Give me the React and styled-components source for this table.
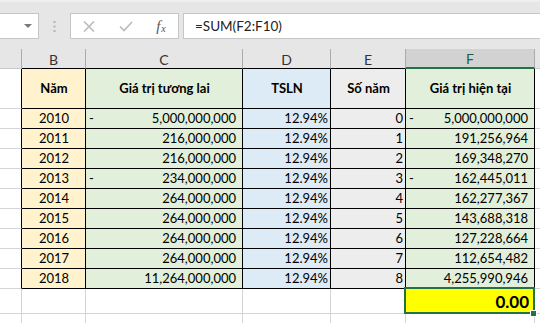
import React from 'react';
import styled, { createGlobalStyle } from 'styled-components';

const GRID = '#d4d4d4';
const INK = '#000';
const GREEN = '#217346';

const GlobalStyle = createGlobalStyle`
  html, body {
    margin: 0;
    padding: 0;
    background: #fff;
  }
  body {
    font-family: Lato, "Liberation Sans", sans-serif;
  }
`;

const Page = styled.div`
  width: 540px;
  height: 323px;
  overflow: hidden;
  background: #fff;
`;

const Chrome = styled.div`
  box-sizing: border-box;
  height: 49px;
  background: #e6e6e6;
  border-top: 2px solid #efefef;
  padding-top: 11px;
  display: flex;
  align-items: flex-start;
`;

const NameBox = styled.div`
  box-sizing: border-box;
  width: 39px;
  height: 26px;
  background: #fff;
  border: 1px solid #c6c6c6;
  border-left: none;
  display: flex;
  align-items: center;
  justify-content: flex-end;
  padding-right: 6px;
`;

const Caret = styled.span`
  width: 0;
  height: 0;
  border-left: 4px solid transparent;
  border-right: 4px solid transparent;
  border-top: 4px solid #7a7a7a;
`;

const Grip = styled.div`
  width: 31px;
  height: 26px;
  display: flex;
  align-items: center;
  justify-content: center;
`;

const FxBox = styled.div`
  box-sizing: border-box;
  width: 109px;
  height: 26px;
  background: #fff;
  border: 1px solid #c6c6c6;
  display: flex;
  align-items: center;
`;

const FxSlot = styled.div`
  width: ${(p) => p.$w}px;
  height: 100%;
  display: flex;
  align-items: center;
  justify-content: center;
`;

const FxLabel = styled.span`
  font-family: "Liberation Serif", serif;
  font-style: italic;
  font-size: 15px;
  color: #555;
  sub {
    font-size: 10px;
    vertical-align: -1px;
    margin-left: 1px;
  }
`;

const FormulaInput = styled.div`
  box-sizing: border-box;
  flex: 1;
  margin-left: 4px;
  height: 26px;
  background: #fff;
  border: 1px solid #c6c6c6;
  border-right: none;
  padding-left: 11px;
  font-size: 13.5px;
  line-height: 24px;
  color: #222;
`;

const Sheet = styled.div`
  display: grid;
  grid-template-columns: 22px 64px 157px 88px 75px 129px 1fr;
  grid-template-rows: 20px 40px repeat(9, 20px) 25px 9px;
  font-size: 13px;
  color: ${INK};
`;

const ColHead = styled.div`
  box-sizing: border-box;
  background: ${(p) => (p.$active ? '#d2d2d2' : '#e6e6e6')};
  border-right: 1px solid #ababab;
  border-bottom: ${(p) =>
    p.$active ? `2px solid ${GREEN}` : `1px solid ${p.$edge || '#c8c8c8'}`};
  color: ${(p) => (p.$active ? '#1f5f3b' : '#333')};
  font-size: 14px;
  display: flex;
  align-items: center;
  justify-content: center;
  padding-top: 1px;
`;

const justify = {
  left: 'flex-start',
  center: 'center',
  right: 'flex-end',
  split: 'space-between',
};

const Cell = styled.div`
  box-sizing: border-box;
  position: relative;
  background: ${(p) => p.$fill || '#fff'};
  border-right: 1px solid ${(p) => p.$right || GRID};
  border-bottom: ${(p) => (p.$noBottom ? 'none' : `1px solid ${p.$bottom || GRID}`)};
  display: flex;
  align-items: center;
  justify-content: ${(p) => justify[p.$align || 'left']};
  padding: 0 ${(p) => p.$padR ?? 2}px 0 ${(p) => p.$padL ?? 3}px;
  font-weight: ${(p) => (p.$bold ? 700 : 400)};
  font-size: ${(p) => p.$size || 13}px;
  line-height: 19px;
  white-space: nowrap;
`;

const Selected = styled(Cell)`
  &::after {
    content: '';
    position: absolute;
    left: -2px;
    top: -2px;
    right: -1px;
    bottom: -1px;
    border: 2px solid ${GREEN};
    z-index: 1;
  }
`;

const Handle = styled.span`
  position: absolute;
  right: -2px;
  bottom: -3px;
  width: 5px;
  height: 5px;
  background: ${GREEN};
  outline: 1px solid #fff;
  z-index: 2;
`;

const FILL = {
  year: '#fff2cc',
  future: '#e2efda',
  rate: '#ddebf7',
  years: '#ededed',
  present: '#e2efda',
};

const rows = [
  ['2010', true, '5,000,000,000', '0', true, '5,000,000,000'],
  ['2011', false, '216,000,000', '1', false, '191,256,964'],
  ['2012', false, '216,000,000', '2', false, '169,348,270'],
  ['2013', true, '234,000,000', '3', true, '162,445,011'],
  ['2014', false, '264,000,000', '4', false, '162,277,367'],
  ['2015', false, '264,000,000', '5', false, '143,688,318'],
  ['2016', false, '264,000,000', '6', false, '127,228,664'],
  ['2017', false, '264,000,000', '7', false, '112,654,482'],
  ['2018', false, '11,264,000,000', '8', false, '4,255,990,946'],
];

function Cross() {
  return (
    <svg width="12" height="11" viewBox="0 0 12 11">
      <path d="M1 0.5 L11 10.5 M11 0.5 L1 10.5" stroke="#bcbcbc" strokeWidth="1.6" fill="none" />
    </svg>
  );
}

function Check() {
  return (
    <svg width="14" height="11" viewBox="0 0 14 11">
      <path d="M1 5.5 L5 9.5 L13 1" stroke="#bcbcbc" strokeWidth="1.7" fill="none" />
    </svg>
  );
}

function Dots() {
  return (
    <svg width="3" height="11" viewBox="0 0 3 11">
      <rect x="0.5" y="0" width="2" height="2" fill="#b3b3b3" />
      <rect x="0.5" y="4.5" width="2" height="2" fill="#b3b3b3" />
      <rect x="0.5" y="9" width="2" height="2" fill="#b3b3b3" />
    </svg>
  );
}

export default function App() {
  return (
    <Page>
      <GlobalStyle />
      <Chrome>
        <NameBox>
          <Caret />
        </NameBox>
        <Grip>
          <Dots />
        </Grip>
        <FxBox>
          <FxSlot $w={36}>
            <Cross />
          </FxSlot>
          <FxSlot $w={37}>
            <Check />
          </FxSlot>
          <FxSlot $w={34}>
            <FxLabel>
              f<sub>x</sub>
            </FxLabel>
          </FxSlot>
        </FxBox>
        <FormulaInput>=SUM(F2:F10)</FormulaInput>
      </Chrome>

      <Sheet>
        <ColHead />
        <ColHead $edge={INK}>B</ColHead>
        <ColHead $edge={INK}>C</ColHead>
        <ColHead $edge={INK}>D</ColHead>
        <ColHead $edge={INK}>E</ColHead>
        <ColHead $active>F</ColHead>
        <ColHead />

        <Cell $right={INK} />
        <Cell $fill={FILL.year} $right={INK} $bottom={INK} $align="center" $bold>
          Năm
        </Cell>
        <Cell $fill={FILL.future} $right={INK} $bottom={INK} $align="center" $bold>
          Giá trị tương lai
        </Cell>
        <Cell $fill={FILL.rate} $right={INK} $bottom={INK} $align="center" $bold>
          TSLN
        </Cell>
        <Cell $fill={FILL.years} $right={INK} $bottom={INK} $align="center" $bold>
          Số năm
        </Cell>
        <Cell $fill={FILL.present} $right={INK} $bottom={INK} $align="center" $bold>
          Giá trị hiện tại
        </Cell>
        <Cell />

        {rows.map(([year, negFuture, future, n, negPresent, present]) => (
          <React.Fragment key={year}>
            <Cell $right={INK} />
            <Cell $fill={FILL.year} $right={INK} $bottom={INK} $align="center">
              {year}
            </Cell>
            <Cell $fill={FILL.future} $right={INK} $bottom={INK} $align="split" $padR={6}>
              <span>{negFuture ? '-' : ''}</span>
              <span>{future}</span>
            </Cell>
            <Cell $fill={FILL.rate} $right={INK} $bottom={INK} $align="right">
              12.94%
            </Cell>
            <Cell $fill={FILL.years} $right={INK} $bottom={INK} $align="right">
              {n}
            </Cell>
            <Cell $fill={FILL.present} $right={INK} $bottom={INK} $align="split" $padR={6}>
              <span>{negPresent ? '-' : ''}</span>
              <span>{present}</span>
            </Cell>
            <Cell />
          </React.Fragment>
        ))}

        <Cell />
        <Cell />
        <Cell />
        <Cell />
        <Cell />
        <Selected $fill="#ffff00" $align="right" $bold $size={17} $padR={5}>
          0.00
          <Handle />
        </Selected>
        <Cell />

        <Cell $noBottom />
        <Cell $noBottom />
        <Cell $noBottom />
        <Cell $noBottom />
        <Cell $noBottom />
        <Cell $noBottom />
        <Cell $noBottom />
      </Sheet>
    </Page>
  );
}
